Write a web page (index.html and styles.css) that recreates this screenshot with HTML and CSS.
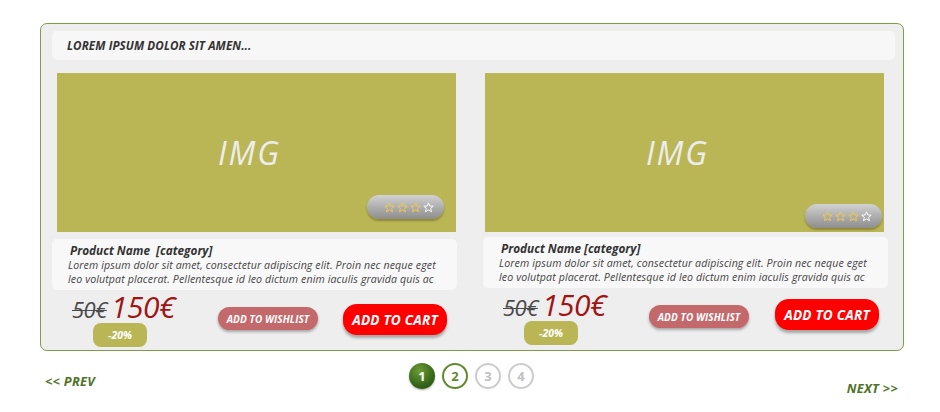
FILE: index.html
```html
<!DOCTYPE html>
<html>
<head>
<meta charset="utf-8">
<link rel="stylesheet" href="styles.css">
</head>
<body>
<div class="box">
  <div class="box-title">LOREM IPSUM DOLOR SIT AMEN...</div>
  <div class="cards">
    <div class="card card--left">
      <div class="card-img">
        <span class="img-label">IMG</span>
        <div class="rating">
          <svg class="star" viewBox="0 0 20 20"><polygon points="10,1.5 12.5,7.3 18.6,7.6 13.9,11.6 15.5,17.8 10,14.4 4.5,17.8 6.1,11.6 1.4,7.6 7.5,7.3" /></svg>
          <svg class="star" viewBox="0 0 20 20"><polygon points="10,1.5 12.5,7.3 18.6,7.6 13.9,11.6 15.5,17.8 10,14.4 4.5,17.8 6.1,11.6 1.4,7.6 7.5,7.3" /></svg>
          <svg class="star" viewBox="0 0 20 20"><polygon points="10,1.5 12.5,7.3 18.6,7.6 13.9,11.6 15.5,17.8 10,14.4 4.5,17.8 6.1,11.6 1.4,7.6 7.5,7.3" /></svg>
          <svg class="star star--off" viewBox="0 0 20 20"><polygon points="10,1.5 12.5,7.3 18.6,7.6 13.9,11.6 15.5,17.8 10,14.4 4.5,17.8 6.1,11.6 1.4,7.6 7.5,7.3" /></svg>
        </div>
      </div>
      <div class="card-desc">
        <div class="card-name">Product Name&nbsp; [category]</div>
        <p class="card-text">Lorem ipsum dolor sit amet, consectetur adipiscing elit. Proin nec neque eget</p>
        <p class="card-text">leo volutpat placerat. Pellentesque id leo dictum enim iaculis gravida quis ac</p>
      </div>
      <div class="card-buy">
        <div class="price">
          <div class="price-row"><span class="old">50€</span> <span class="new">150€</span></div>
          <div class="discount">-20%</div>
        </div>
        <button class="wish">ADD TO WISHLIST</button>
        <button class="cart">ADD TO CART</button>
      </div>
    </div>
    <div class="card card--right">
      <div class="card-img">
        <span class="img-label">IMG</span>
        <div class="rating">
          <svg class="star" viewBox="0 0 20 20"><polygon points="10,1.5 12.5,7.3 18.6,7.6 13.9,11.6 15.5,17.8 10,14.4 4.5,17.8 6.1,11.6 1.4,7.6 7.5,7.3" /></svg>
          <svg class="star" viewBox="0 0 20 20"><polygon points="10,1.5 12.5,7.3 18.6,7.6 13.9,11.6 15.5,17.8 10,14.4 4.5,17.8 6.1,11.6 1.4,7.6 7.5,7.3" /></svg>
          <svg class="star" viewBox="0 0 20 20"><polygon points="10,1.5 12.5,7.3 18.6,7.6 13.9,11.6 15.5,17.8 10,14.4 4.5,17.8 6.1,11.6 1.4,7.6 7.5,7.3" /></svg>
          <svg class="star star--off" viewBox="0 0 20 20"><polygon points="10,1.5 12.5,7.3 18.6,7.6 13.9,11.6 15.5,17.8 10,14.4 4.5,17.8 6.1,11.6 1.4,7.6 7.5,7.3" /></svg>
        </div>
      </div>
      <div class="card-desc">
        <div class="card-name">Product Name [category]</div>
        <p class="card-text">Lorem ipsum dolor sit amet, consectetur adipiscing elit. Proin nec neque eget</p>
        <p class="card-text">leo volutpat placerat. Pellentesque id leo dictum enim iaculis gravida quis ac</p>
      </div>
      <div class="card-buy">
        <div class="price">
          <div class="price-row"><span class="old">50€</span> <span class="new">150€</span></div>
          <div class="discount">-20%</div>
        </div>
        <button class="wish">ADD TO WISHLIST</button>
        <button class="cart">ADD TO CART</button>
      </div>
    </div>
  </div>
</div>
<div class="pager">
  <a class="prev">&lt;&lt; PREV</a>
  <div class="pages">
    <span class="page page--current">1</span>
    <span class="page page--next">2</span>
    <span class="page">3</span>
    <span class="page">4</span>
  </div>
  <a class="next">NEXT &gt;&gt;</a>
</div>
</body>
</html>
```
FILE: styles.css
```css
html, body {
  margin: 0;
  padding: 0;
  background: #ffffff;
}
body {
  width: 940px;
  height: 412px;
  overflow: hidden;
  font-family: "Open Sans", "Noto Sans", "DejaVu Sans", sans-serif;
  font-style: italic;
}
.box {
  box-sizing: border-box;
  width: 864px;
  height: 328px;
  margin: 23px 0 0 40px;
  border: 1px solid #7f9d48;
  border-radius: 7px;
  background: #eeeeee;
  padding: 7px 8px 0 11px;
}
.box-title {
  height: 29px;
  line-height: 29px;
  border-radius: 5px;
  background: #f7f7f7;
  padding-left: 15px;
  font-size: 11.6px;
  font-weight: 700;
  color: #333;
  letter-spacing: 0.1px;
}
.cards {
  display: grid;
  grid-template-columns: 405px 405px;
  column-gap: 26px;
  margin-top: 13px;
}
.card-img {
  position: relative;
  height: 159px;
  background: #bab655;
  display: flex;
  align-items: center;
  justify-content: center;
}
.card--left .card-img { margin: 0 1px 0 5px; }
.card--right .card-img { margin: 0 4px 0 2px; }
.img-label {
  font-size: 32px;
  color: #ededed;
  letter-spacing: 2px;
  font-weight: 400;
  margin-right: 14px;
}
.rating {
  position: absolute;
  width: 77px;
  height: 24px;
  border-radius: 12px;
  background: linear-gradient(#d2d2d2, #ababab 55%, #8e8e8e);
  box-shadow: 0 2px 2px rgba(90, 80, 20, 0.45);
  display: flex;
  align-items: center;
  justify-content: center;
  gap: 2px;
  padding-left: 6px;
  box-sizing: border-box;
}
.card--left .rating { right: 12px; bottom: 13px; }
.card--right .rating { right: 2px; bottom: 4px; }
.star {
  width: 11px;
  height: 11px;
}
.star polygon {
  fill: none;
  stroke: #f2c94a;
  stroke-width: 1.7;
  stroke-linejoin: round;
}
.star--off polygon { stroke: #ffffff; }
.card-desc {
  margin-top: 7px;
  height: 51px;
  box-sizing: border-box;
  background: #f8f8f8;
  border-radius: 5px;
  padding: 3px 8px 0 16px;
  overflow: hidden;
}
.card--right .card-desc { margin-top: 5px; }
.card-name {
  font-size: 11.8px;
  font-weight: 700;
  color: #333;
  line-height: 16px;
  padding-left: 2px;
}
.card-text {
  margin: 0;
  font-size: 10.6px;
  line-height: 14px;
  letter-spacing: 0.12px;
  color: #444;
  white-space: nowrap;
}
.card-buy {
  display: flex;
  align-items: flex-start;
  padding-left: 20px;
}
.price {
  width: 146px;
}
.price-row {
  height: 33px;
  line-height: 33px;
  white-space: nowrap;
}
.old {
  font-size: 22px;
  color: #4a4a4a;
  text-decoration: line-through;
  text-decoration-thickness: 1px;
  letter-spacing: -0.5px;
}
.new {
  font-size: 30px;
  color: #a01414;
  letter-spacing: -0.5px;
}
.discount {
  width: 54px;
  height: 24px;
  line-height: 24px;
  margin-left: 21px;
  border-radius: 8px;
  background: #bab655;
  color: #fff;
  font-size: 10.5px;
  font-weight: 700;
  text-align: center;
}
button {
  font-family: inherit;
  font-style: italic;
  font-weight: 700;
  color: #fff;
  border: none;
  padding: 0;
  cursor: pointer;
}
.wish {
  width: 100px;
  height: 23px;
  margin-top: 17px;
  border-radius: 12px;
  background: #c4696b;
  font-size: 10px;
  letter-spacing: 0.1px;
  box-shadow: 0 2px 3px rgba(0, 0, 0, 0.3);
}
.cart {
  width: 104px;
  height: 31px;
  margin-top: 14px;
  margin-left: 25px;
  border-radius: 14px;
  background: #ff0000;
  font-size: 13.6px;
  letter-spacing: 0.2px;
  box-shadow: 0 3px 3px rgba(0, 0, 0, 0.3);
}
.card--right .cart { margin-top: 11px; margin-left: 26px; }
.pager {
  display: grid;
  grid-template-columns: 1fr auto 1fr;
  margin: 12px 42px 0 45px;
}
.prev, .next {
  font-size: 12.8px;
  font-weight: 700;
  color: #4d7226;
  letter-spacing: 0.3px;
}
.prev { margin-top: 9px; }
.next { margin-top: 16px; justify-self: end; }
.pages {
  display: flex;
  gap: 7px;
  margin-left: 0;
}
.page {
  box-sizing: border-box;
  width: 26px;
  height: 26px;
  border-radius: 50%;
  border: 2px solid #cccccc;
  color: #c0c0c0;
  font-style: normal;
  font-weight: 700;
  font-size: 13px;
  display: flex;
  align-items: center;
  justify-content: center;
}
.page--current {
  border: none;
  background: radial-gradient(circle at 40% 30%, #6e9c34, #36661a 60%, #244a0e);
  color: #fff;
  box-shadow: 0 1px 2px rgba(0, 0, 0, 0.35);
}
.page--next {
  border-color: #5e8a2c;
  color: #5e8a2c;
}
```
